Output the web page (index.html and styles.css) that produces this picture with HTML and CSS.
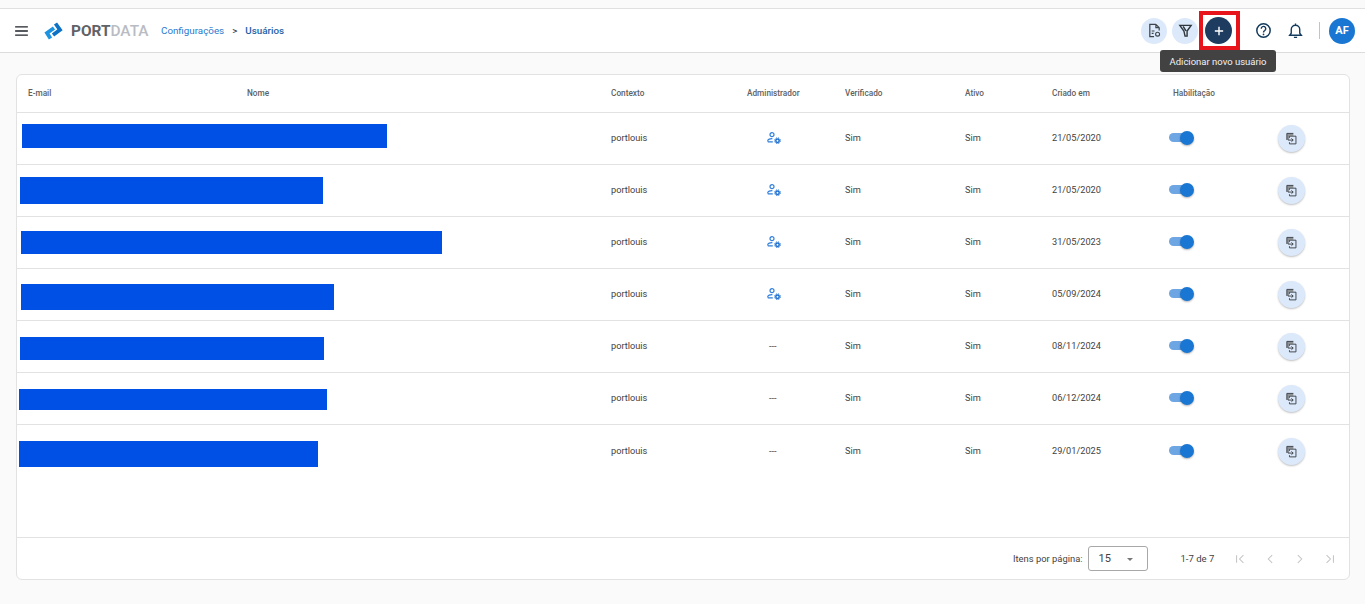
FILE: index.html
```html
<!DOCTYPE html>
<html lang="pt-BR">
<head>
<meta charset="utf-8">
<title>Usuários</title>
<link rel="stylesheet" href="styles.css">
</head>
<body>
<svg class="defs" width="0" height="0" aria-hidden="true">
  <symbol id="admin" viewBox="0 0 14 12"><circle cx="5" cy="2.700" r="2" fill="none" stroke="currentColor" stroke-width="1.200"/><path d="M.8 9.500V8.600c0-1.200 2.200-2.100 4.600-2M.8 9.800h5" fill="none" stroke="currentColor" stroke-width="1.200"/><circle cx="10.500" cy="8.700" r="1.700" fill="none" stroke="#1c6fd0" stroke-width="1.500"/><circle cx="10.500" cy="8.700" r="2.900" fill="none" stroke="#1c6fd0" stroke-width="1" stroke-dasharray="1.200 1.100"/></symbol>
  <symbol id="copy" viewBox="0 0 14 14"><path d="M2 1.500h7v2.500H4.500v4.500H2z" fill="#8d9195"/><path d="M2 8.500V1.500h7M4.800 4.500h7v8.300h-7v-1.800M4.800 6.300V4.500" fill="none" stroke="#3a4046" stroke-width="1"/><path d="M3.200 8.700h5.600M6.900 6.900l1.900 1.800-1.900 1.800" fill="none" stroke="#3a4046" stroke-width="1"/></symbol>
</svg>
<header class="topbar">
  <svg class="menu" viewBox="0 0 14 11" aria-hidden="true"><path d="M0 1h14M0 5.500h14M0 10h14" stroke="#1f2328" stroke-width="1.500"/></svg>
  <svg class="logo-mark" viewBox="0 0 19 18" aria-hidden="true"><path d="M10 6 3 11l3.500 5.500" fill="none" stroke="#1b93e0" stroke-width="3.800"/><path d="M11.500 1.500 16 7.800 9 13" fill="none" stroke="#0d72c6" stroke-width="3.800"/></svg>
  <span class="logo-text"><b>PORT</b>DATA</span>
  <nav class="crumbs"><a>Configurações</a><span class="sep">&gt;</span><a class="current">Usuários</a></nav>
  <div class="actions">
    <button class="round pale"><svg viewBox="0 0 16 16" aria-hidden="true"><path d="M9.500 1.500H3v13h4.500M9.500 1.500 13 5v3M9.500 1.500V5H13" fill="none" stroke="#3c4349" stroke-width="1.300"/><path d="M5 8.500h3M5 11h2" stroke="#3c4349" stroke-width="1.200"/><circle cx="11.300" cy="11.900" r="2.100" fill="none" stroke="#3c4349" stroke-width="1.200"/></svg></button>
    <button class="round pale"><svg viewBox="0 0 16 16" aria-hidden="true"><path d="M2 2.500h12L9.700 8.500v5.500H7.500L6.300 8.500zM5.500 3.500l3 5" fill="none" stroke="#2f363c" stroke-width="1.500"/></svg></button>
    <span class="add-frame"><button class="round dark"><svg viewBox="0 0 12 12" aria-hidden="true"><path d="M6 1v10M1 6h10" stroke="#fff" stroke-width="1.700"/></svg></button></span>
    <button class="plain help"><svg viewBox="0 0 16 16" aria-hidden="true"><circle cx="8" cy="8" r="6.300" fill="none" stroke="#123a5c" stroke-width="1.400"/><path d="M5.900 6.300a2.100 2.100 0 1 1 3.300 1.700c-.8.500-1.200.9-1.200 1.800" fill="none" stroke="#123a5c" stroke-width="1.300"/><circle cx="8" cy="11.700" r=".8" fill="#123a5c"/></svg></button>
    <button class="plain bell"><svg viewBox="0 0 16 16" aria-hidden="true"><path d="M2.500 12.500h11l-1.500-2V7a4 4 0 0 0-8 0v3.500zM8 1.500V3M6.500 14.500h3" fill="none" stroke="#123a5c" stroke-width="1.300"/></svg></button>
    <span class="divider"></span>
    <span class="avatar">AF</span>
  </div>
  <div class="tooltip">Adicionar novo usuário</div>
</header>

<main class="content">
  <section class="card">
    <div class="row head">
      <span>E-mail</span><span>Nome</span><span>Contexto</span><span>Administrador</span><span>Verificado</span><span>Ativo</span><span>Criado em</span><span>Habilitação</span><span></span>
    </div>

    <div class="row body">
      <i class="mask m1"></i><span></span><span></span><span>portlouis</span>
      <span class="admin"><svg><use href="#admin"/></svg></span>
      <span>Sim</span><span>Sim</span><span>21/05/2020</span>
      <span class="switch"><i></i></span>
      <span class="cell-btn"><button class="round pale small"><svg><use href="#copy"/></svg></button></span>
    </div>
    <div class="row body">
      <i class="mask m2"></i><span></span><span></span><span>portlouis</span>
      <span class="admin"><svg><use href="#admin"/></svg></span>
      <span>Sim</span><span>Sim</span><span>21/05/2020</span>
      <span class="switch"><i></i></span>
      <span class="cell-btn"><button class="round pale small"><svg><use href="#copy"/></svg></button></span>
    </div>
    <div class="row body">
      <i class="mask m3"></i><span></span><span></span><span>portlouis</span>
      <span class="admin"><svg><use href="#admin"/></svg></span>
      <span>Sim</span><span>Sim</span><span>31/05/2023</span>
      <span class="switch"><i></i></span>
      <span class="cell-btn"><button class="round pale small"><svg><use href="#copy"/></svg></button></span>
    </div>
    <div class="row body">
      <i class="mask m4"></i><span></span><span></span><span>portlouis</span>
      <span class="admin"><svg><use href="#admin"/></svg></span>
      <span>Sim</span><span>Sim</span><span>05/09/2024</span>
      <span class="switch"><i></i></span>
      <span class="cell-btn"><button class="round pale small"><svg><use href="#copy"/></svg></button></span>
    </div>
    <div class="row body">
      <i class="mask m5"></i><span></span><span></span><span>portlouis</span>
      <span class="admin dash">---</span>
      <span>Sim</span><span>Sim</span><span>08/11/2024</span>
      <span class="switch"><i></i></span>
      <span class="cell-btn"><button class="round pale small"><svg><use href="#copy"/></svg></button></span>
    </div>
    <div class="row body">
      <i class="mask m6"></i><span></span><span></span><span>portlouis</span>
      <span class="admin dash">---</span>
      <span>Sim</span><span>Sim</span><span>06/12/2024</span>
      <span class="switch"><i></i></span>
      <span class="cell-btn"><button class="round pale small"><svg><use href="#copy"/></svg></button></span>
    </div>
    <div class="row body last">
      <i class="mask m7"></i><span></span><span></span><span>portlouis</span>
      <span class="admin dash">---</span>
      <span>Sim</span><span>Sim</span><span>29/01/2025</span>
      <span class="switch"><i></i></span>
      <span class="cell-btn"><button class="round pale small"><svg><use href="#copy"/></svg></button></span>
    </div>

    <div class="spacer"></div>

    <footer class="pager">
      <span class="per-label">Itens por página:</span>
      <span class="select">15<i class="caret"></i></span>
      <span class="range">1-7 de 7</span>
      <span class="nav-btns">
        <svg viewBox="0 0 14 14" aria-hidden="true"><path d="M3 2.500v9M11 2.500 6.500 7l4.500 4.500" fill="none" stroke="#c4c4c4" stroke-width="1.200"/></svg>
        <svg viewBox="0 0 14 14" aria-hidden="true"><path d="M9.500 2.500 5 7l4.500 4.500" fill="none" stroke="#c4c4c4" stroke-width="1.200"/></svg>
        <svg viewBox="0 0 14 14" aria-hidden="true"><path d="M4.500 2.500 9 7l-4.500 4.500" fill="none" stroke="#c4c4c4" stroke-width="1.200"/></svg>
        <svg viewBox="0 0 14 14" aria-hidden="true"><path d="M11 2.500v9M3 2.500 7.500 7 3 11.500" fill="none" stroke="#c4c4c4" stroke-width="1.200"/></svg>
      </span>
    </footer>
  </section>
</main>
</body>
</html>
```

FILE: styles.css
```css
* { box-sizing: border-box; }
html, body { height: 100%; }
body {
  margin: 0;
  background: #fafafa;
  font-family: Roboto, "Liberation Sans", sans-serif;
  font-size: 9.200px;
  color: #424242;
  overflow: hidden;
}
.defs { position: absolute; }
button { border: 0; padding: 0; background: none; display: flex; align-items: center; justify-content: center; }

.topbar {
  position: relative;
  height: 45px;
  margin-top: 8px;
  padding: 0 10px 0 15px;
  display: flex;
  align-items: center;
  background: #fff;
  border-top: 1px solid #e0e0e0;
  border-bottom: 1px solid #dcdcdc;
}
.menu { width: 13px; height: 10px; margin-right: 16px; }
.logo-mark { width: 19px; height: 18px; margin-right: 8px; }
.logo-text { font-size: 15.400px; color: #b9bcc3; font-weight: 500; width: 78px; }
.logo-text b { color: #5f6267; font-weight: 700; }
.crumbs { margin-left: 12px; display: flex; gap: 8px; font-size: 9.800px; color: #2a7ad0; }
.crumbs .sep { color: #1d2b3a; }
.crumbs .current { color: #1c5fa8; font-weight: 500; }

.actions { margin-left: auto; display: flex; align-items: center; }
.round { width: 26px; height: 26px; border-radius: 50%; }
.round svg { width: 15px; height: 15px; }
.pale { background: #dbe9fb; }
.dark { width: 27px; height: 27px; background: #1d3c5f; }
.dark svg { width: 10px; height: 10px; }
.actions .pale + .pale { margin-left: 5px; margin-right: 1px; }
.add-frame {
  width: 41px; height: 39px;
  border: 4px solid #e8141c;
  padding-left: 2px;
  display: flex; align-items: center;
}
.plain { width: 17px; height: 17px; }
.plain svg { width: 17px; height: 17px; }
.help { margin-left: 15px; }
.bell { margin-left: 15px; }
.divider { width: 1px; height: 17px; background: #a9c9ea; margin: 0 9px 0 15px; }
.avatar {
  width: 26px; height: 26px; border-radius: 50%;
  background: #1976d2; color: #fff;
  font-size: 11px; font-weight: 700;
  display: flex; align-items: center; justify-content: center;
}
.tooltip {
  position: absolute;
  left: 1160px; top: 41px;
  width: 116px; height: 22px;
  border-radius: 3px;
  background: #424242;
  color: #f2f2f2;
  font-size: 9.500px;
  display: flex; align-items: center; justify-content: center;
  z-index: 2;
}

.content { padding: 21px 15px 0 16px; }
.card {
  height: 506px;
  background: #fff;
  border: 1px solid #e2e2e2;
  border-radius: 6px;
  display: flex;
  flex-direction: column;
}
.row {
  position: relative;
  display: grid;
  grid-template-columns: 219px 364px 136px 98px 120px 87px 121px 105px 1fr;
  padding-left: 11px;
  align-items: center;
  border-bottom: 1px solid #e2e2e2;
  flex: none;
}
.head { height: 38px; padding-bottom: 1px; font-weight: 500; color: #616161; font-size: 8.250px; }
.body { height: 52px; padding-bottom: 2px; }
.body.last { border-bottom: 0; height: 53px; }
.admin { padding-left: 20px; display: flex; align-items: center; padding-top: 1px; }
.admin svg { width: 14px; height: 12px; color: #2f7fdc; }
.dash { padding-left: 22px; padding-top: 0; }
.switch { position: relative; display: block; width: 24px; height: 9px; border-radius: 5px; background: #6ea6e4; margin-left: -4px; }
.switch i { position: absolute; right: -1px; top: -2.500px; width: 14px; height: 14px; border-radius: 50%; background: #1976d2; box-shadow: 0 1px 2px rgba(0,0,0,.3); }
.cell-btn { display: flex; padding-top: 1px; }
.small { width: 27px; height: 27px; box-shadow: 0 1px 2px rgba(0,0,0,.25); }
.small svg { width: 13px; height: 13px; }

.mask { position: absolute; background: #0050e6; }
.m1 { left: 5px; top: 11px; width: 365px; height: 24px; }
.m2 { left: 3px; top: 12px; width: 303px; height: 27px; }
.m3 { left: 4px; top: 14px; width: 421px; height: 23px; }
.m4 { left: 4px; top: 15px; width: 313px; height: 26px; }
.m5 { left: 3px; top: 16px; width: 304px; height: 23px; }
.m6 { left: 2px; top: 16px; width: 308px; height: 21px; }
.m7 { left: 2px; top: 16px; width: 299px; height: 26px; }

.spacer { flex: 1; }
.pager {
  height: 42px;
  border-top: 1px solid #e2e2e2;
  display: flex;
  align-items: center;
  flex: none;
}
.per-label { margin-left: 996px; font-size: 9.400px; }
.select {
  margin-left: 5px;
  width: 60px; height: 25px;
  border: 1px solid #a8a8a8;
  border-radius: 3px;
  padding-left: 10px;
  font-size: 11px;
  display: flex; align-items: center;
  position: relative;
}
.caret { position: absolute; right: 14px; top: 11px; border: 3px solid transparent; border-top: 3px solid #777; }
.range { margin-left: 33px; font-size: 9.500px; }
.nav-btns { margin-left: 20px; display: flex; gap: 18px; }
.nav-btns svg { width: 12px; height: 12px; }
```
